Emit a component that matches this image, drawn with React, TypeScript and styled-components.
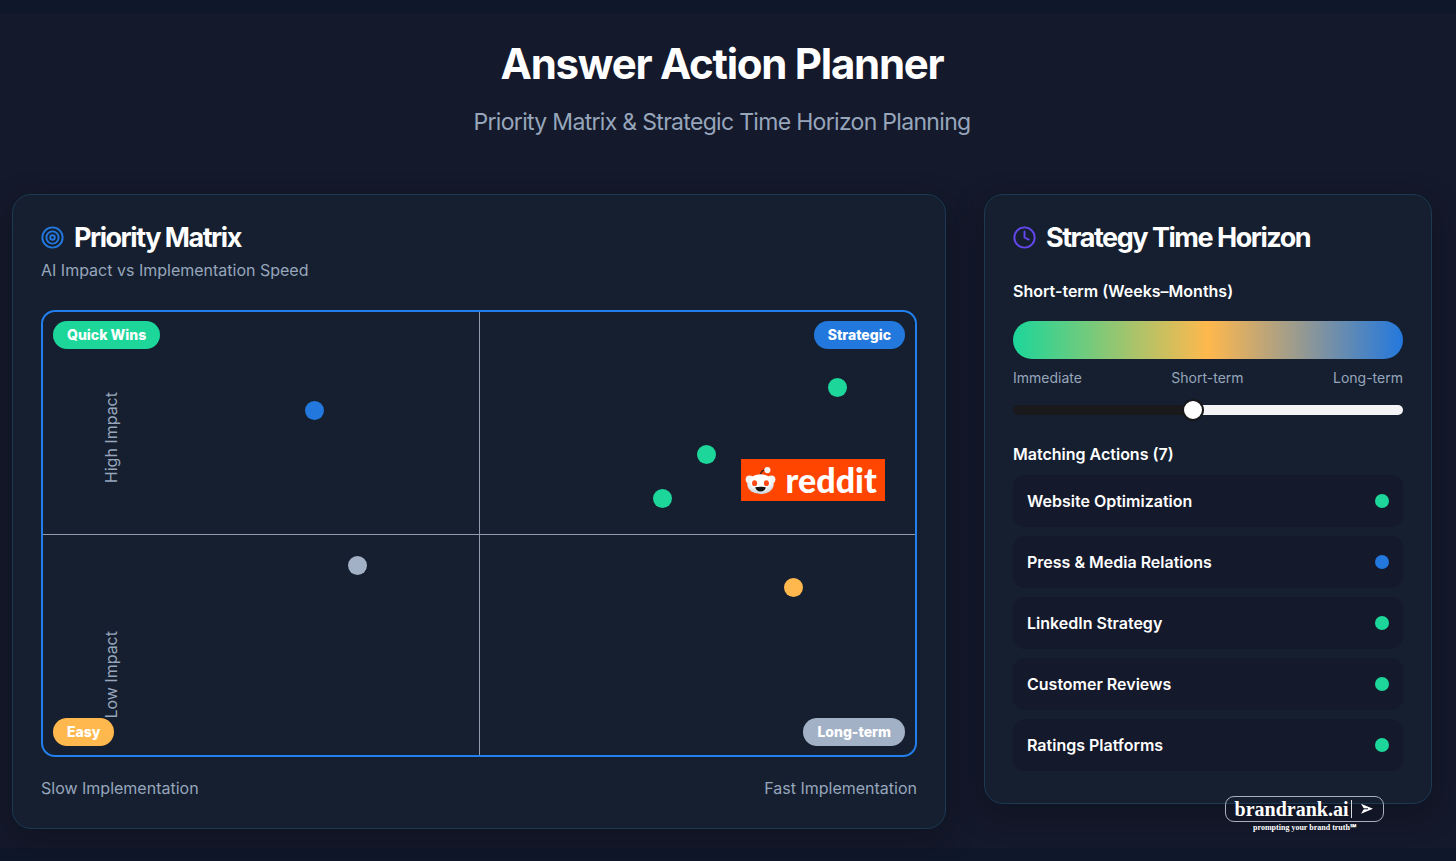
import React, { useState } from "react";
import styled, { createGlobalStyle } from "styled-components";

const color = {
  green: "#1cd69a",
  blue: "#2378dd",
  amber: "#ffb84d",
  grey: "#a3b1c6",
  muted: "#97a6bb",
};

const GlobalStyle = createGlobalStyle`
  *, *::before, *::after { box-sizing: border-box; }
  body {
    margin: 0;
    background: #0f172a;
    color: #fff;
    font-family: Inter, "Liberation Sans", sans-serif;
    font-size: 16px;
    line-height: 24px;
  }
  h1, h2, h3, p, ul { margin: 0; padding: 0; }
`;

const Page = styled.main`
  margin: 14px 0 12px;
  padding: 22px 24px 19px 12px;
  background: #14192b;
`;

const Header = styled.header`
  display: flex;
  flex-direction: column;
  align-items: center;
  gap: 15px;
  padding-bottom: 57px;
  text-align: center;
`;

const Title = styled.h1`
  font-size: 42px;
  font-weight: 700;
  line-height: 56px;
  letter-spacing: -0.03em;
`;

const Subtitle = styled.p`
  color: ${color.muted};
  font-size: 23px;
  line-height: 30px;
  letter-spacing: -0.03em;
`;

const Columns = styled.div`
  display: grid;
  grid-template-columns: repeat(3, minmax(0, 1fr));
  gap: 38px;
  align-items: start;
`;

const Card = styled.section<{ $span?: number }>`
  grid-column: span ${(p) => p.$span ?? 1};
  padding: 28px;
  background: #151f30;
  border: 1px solid #1b3953;
  border-radius: 19px;
  box-shadow: 0 10px 30px rgba(9, 12, 20, 0.4);
`;

const CardHeading = styled.div`
  display: flex;
  align-items: center;
  gap: 10px;
  height: 28px;

  svg { flex: none; }
`;

const CardTitle = styled.h2`
  padding-top: 2px;
  font-size: 27px;
  font-weight: 700;
  line-height: 28px;
  letter-spacing: -0.055em;
`;

const Muted = styled.p`
  color: ${color.muted};
`;

const MatrixCaption = styled(Muted)`
  padding: 7px 0 28px;
`;

const Matrix = styled.div`
  position: relative;
  height: 447px;
  border: 2px solid #2280ee;
  border-radius: 14px;
  overflow: hidden;
`;

const AxisLine = styled.div<{ $vertical?: boolean }>`
  position: absolute;
  background: #8f9bae;
  ${(p) =>
    p.$vertical
      ? "left: 50%; top: 0; bottom: 0; width: 1px;"
      : "top: 50%; left: 0; right: 0; height: 1px;"}
`;

const Pill = styled.span<{ $tone: string; $v: "top" | "bottom"; $h: "left" | "right" }>`
  position: absolute;
  ${(p) => p.$v}: 9px;
  ${(p) => p.$h}: 10px;
  padding: 0 14px;
  border-radius: 14px;
  background: ${(p) => p.$tone};
  font-size: 14px;
  font-weight: 800;
  line-height: 28px;
`;

const ImpactLabel = styled.span<{ $top: number }>`
  position: absolute;
  left: 56px;
  top: ${(p) => p.$top}%;
  color: ${color.muted};
  writing-mode: vertical-rl;
  transform: rotate(180deg);
`;

const Point = styled.span<{ $x: number; $y: number; $tone: string }>`
  position: absolute;
  left: ${(p) => p.$x}%;
  top: ${(p) => p.$y}%;
  width: 19px;
  height: 19px;
  border-radius: 50%;
  background: ${(p) => p.$tone};
`;

const RedditBadge = styled.div`
  position: absolute;
  left: 80%;
  top: 147px;
  display: flex;
  align-items: center;
  gap: 10px;
  width: 144px;
  height: 42px;
  padding-left: 4px;
  background: #ff4500;
  font-family: Lato, sans-serif;
  font-size: 34px;
  font-weight: 900;
  line-height: 42px;

  svg { flex: none; }
`;

const AxisCaptions = styled.div`
  display: flex;
  justify-content: space-between;
  padding-top: 19px;
  color: ${color.muted};
`;

const HorizonValue = styled.h3`
  padding-top: 28px;
  font-size: 16px;
  font-weight: 600;
  line-height: 24px;
`;

const HorizonBar = styled.div`
  height: 38px;
  margin-top: 18px;
  border-radius: 19px;
  background: linear-gradient(90deg, ${color.green}, ${color.amber} 50%, ${color.blue});
`;

const Scale = styled.div`
  display: flex;
  justify-content: space-between;
  padding: 9px 0 10px;
  color: ${color.muted};
  font-size: 14px;
  line-height: 20px;
`;

const Slider = styled.input`
  display: block;
  width: 100%;
  height: 24px;
  margin: 0;
  appearance: none;
  background: none;
  cursor: pointer;

  &::-webkit-slider-runnable-track {
    height: 10px;
    border-radius: 5px;
    background: linear-gradient(90deg, #19191b var(--fill), #f4f3f5 var(--fill));
  }
  &::-webkit-slider-thumb {
    appearance: none;
    width: 22px;
    height: 22px;
    margin-top: -6px;
    border: 2px solid #18181b;
    border-radius: 50%;
    background: #fff;
  }
`;

const ActionsTitle = styled.h3`
  padding: 20px 0 9px;
  font-size: 16px;
  font-weight: 600;
  line-height: 24px;
`;

const ActionList = styled.ul`
  display: grid;
  gap: 9px;
  padding-bottom: 4px;
  list-style: none;
`;

const ActionRow = styled.li`
  display: flex;
  align-items: center;
  justify-content: space-between;
  height: 52px;
  border-radius: 12px;
  background: #14192b;
  font-weight: 600;
  padding: 0 14px;
`;

const ActionDot = styled.span<{ $tone: string }>`
  width: 14px;
  height: 14px;
  border-radius: 50%;
  background: ${(p) => p.$tone};
`;

const Brand = styled.div`
  position: absolute;
  top: 796px;
  right: 72px;
  width: 159px;
  font-family: "Liberation Serif", serif;
  font-weight: 700;
  text-align: center;
`;

const BrandBox = styled.div`
  display: flex;
  align-items: center;
  justify-content: center;
  gap: 2px;
  height: 26px;
  padding-left: 3px;
  border: 1px solid #a9b0bd;
  border-radius: 9px;
  font-size: 20px;
  line-height: 24px;
`;

const BrandTag = styled.p`
  font-size: 8px;
  line-height: 12px;
`;

const TargetIcon = () => (
  <svg width="23" height="23" viewBox="0 0 24 24" fill="none" stroke="#2378dd" strokeWidth="2">
    <circle cx="12" cy="12" r="10.6" />
    <circle cx="12" cy="12" r="6.4" />
    <circle cx="12" cy="12" r="2.4" />
  </svg>
);

const ClockIcon = () => (
  <svg
    width="23"
    height="23"
    viewBox="0 0 24 24"
    fill="none"
    stroke="#6547ee"
    strokeWidth="2"
    strokeLinecap="round"
    strokeLinejoin="round"
  >
    <circle cx="12" cy="12" r="10.6" />
    <path d="M12 5.6V12l4.4 2.2" />
  </svg>
);

const Snoo = () => (
  <svg width="31" height="30" viewBox="0 -1 31 30">
    <defs>
      <radialGradient id="face" cx="50%" cy="30%" r="70%">
        <stop offset="0.5" stopColor="#fff" />
        <stop offset="1" stopColor="#c9d3d8" />
      </radialGradient>
    </defs>
    <path d="M15.5 9.5c0-3.4 2-5.600 5.400-5.600" fill="none" stroke="#3b2620" strokeWidth="1.4" />
    <circle cx="22.4" cy="4.1" r="3.1" fill="#f5f5f5" />
    <circle cx="4.6" cy="13.4" r="4" fill="#f4f4f4" />
    <circle cx="26.4" cy="13.4" r="4" fill="#f4f4f4" />
    <ellipse cx="15.5" cy="18.2" rx="13.2" ry="9.9" fill="url(#face)" />
    <ellipse cx="9.6" cy="17.2" rx="2.5" ry="2.9" fill="#ff4a16" />
    <ellipse cx="21.4" cy="17.2" rx="2.5" ry="2.9" fill="#ff4a16" />
    <path d="M10.2 21.3c3.4-.7 7.2-.7 10.6 0-.5 2.7-2.5 4.2-5.3 4.2s-4.8-1.5-5.3-4.2Z" fill="#141414" />
  </svg>
);

const BrandMark = () => (
  <svg width="27" height="20" viewBox="0 0 27 20">
    <path d="M1.5 1v18" stroke="#d5d9e0" strokeWidth="1" />
    <path d="M11 4.8 23 9.8 11 14.8 14 9.8Z" fill="#fff" />
    <path d="M13 9.8H18" stroke="#14192b" strokeWidth="1" />
  </svg>
);

const points = [
  { name: "Press & Media Relations", x: 30, y: 20, tone: color.blue },
  { name: "Website Optimization", x: 90, y: 15, tone: color.green },
  { name: "LinkedIn Strategy", x: 75, y: 30, tone: color.green },
  { name: "Customer Reviews", x: 70, y: 40, tone: color.green },
  { name: "Reddit", x: 80, y: 35, tone: color.green },
  { name: "Partnerships", x: 35, y: 55, tone: color.grey },
  { name: "Ratings Platforms", x: 85, y: 60, tone: color.amber },
];

const actions = [
  { name: "Website Optimization", tone: color.green },
  { name: "Press & Media Relations", tone: color.blue },
  { name: "LinkedIn Strategy", tone: color.green },
  { name: "Customer Reviews", tone: color.green },
  { name: "Ratings Platforms", tone: color.green },
];

export default function App() {
  const [horizon, setHorizon] = useState(46);

  return (
    <>
      <GlobalStyle />
      <Page>
        <Header>
          <Title>Answer Action Planner</Title>
          <Subtitle>Priority Matrix &amp; Strategic Time Horizon Planning</Subtitle>
        </Header>
        <Columns>
          <Card $span={2}>
            <CardHeading>
              <TargetIcon />
              <CardTitle>Priority Matrix</CardTitle>
            </CardHeading>
            <MatrixCaption>AI Impact vs Implementation Speed</MatrixCaption>
            <Matrix>
              <AxisLine />
              <AxisLine $vertical />
              <ImpactLabel $top={18}>High Impact</ImpactLabel>
              <ImpactLabel $top={72}>Low Impact</ImpactLabel>
              <Pill $tone={color.green} $v="top" $h="left">Quick Wins</Pill>
              <Pill $tone={color.blue} $v="top" $h="right">Strategic</Pill>
              <Pill $tone={color.amber} $v="bottom" $h="left">Easy</Pill>
              <Pill $tone={color.grey} $v="bottom" $h="right">Long-term</Pill>
              {points.map((p) => (
                <Point key={p.name} $x={p.x} $y={p.y} $tone={p.tone} />
              ))}
              <RedditBadge>
                <Snoo />
                reddit
              </RedditBadge>
            </Matrix>
            <AxisCaptions>
              <span>Slow Implementation</span>
              <span>Fast Implementation</span>
            </AxisCaptions>
          </Card>
          <Card>
            <CardHeading>
              <ClockIcon />
              <CardTitle>Strategy Time Horizon</CardTitle>
            </CardHeading>
            <HorizonValue id="horizon-label">Short-term (Weeks–Months)</HorizonValue>
            <HorizonBar />
            <Scale>
              <span>Immediate</span>
              <span>Short-term</span>
              <span>Long-term</span>
            </Scale>
            <Slider
              type="range"
              min={0}
              max={100}
              value={horizon}
              aria-labelledby="horizon-label"
              onChange={(e) => setHorizon(Number(e.target.value))}
              style={{ "--fill": `${horizon}%` } as React.CSSProperties}
            />
            <ActionsTitle>Matching Actions (7)</ActionsTitle>
            <ActionList>
              {actions.map((a) => (
                <ActionRow key={a.name}>
                  {a.name}
                  <ActionDot $tone={a.tone} />
                </ActionRow>
              ))}
            </ActionList>
          </Card>
        </Columns>
      </Page>
      <Brand>
        <BrandBox>
          brandrank.ai
          <BrandMark />
        </BrandBox>
        <BrandTag>prompting your brand truth℠</BrandTag>
      </Brand>
    </>
  );
}
